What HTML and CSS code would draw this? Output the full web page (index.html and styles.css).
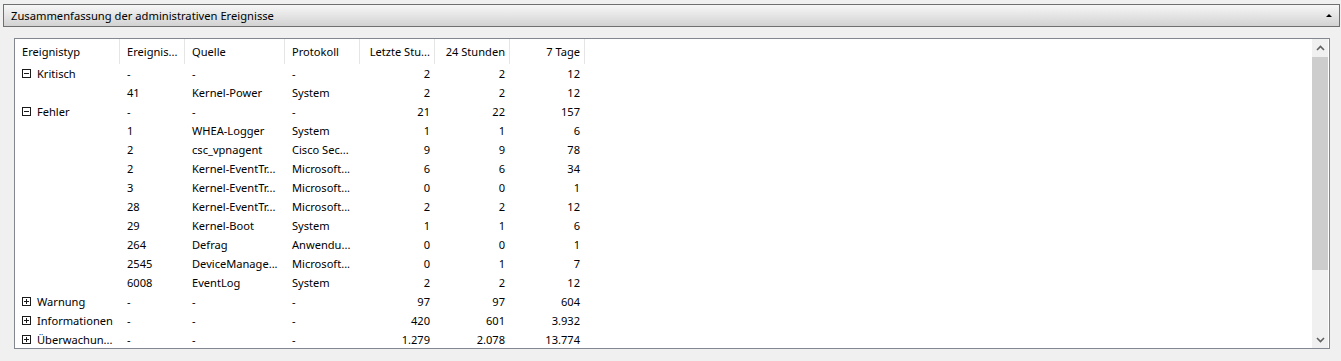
FILE: index.html
```html
<!DOCTYPE html>
<html lang="de">
<head>
<meta charset="utf-8">
<link rel="stylesheet" href="styles.css">
</head>
<body>
<div class="header">
  <span class="title">Zusammenfassung der administrativen Ereignisse</span>
  <span class="collapse"></span>
</div>
<div class="panel">
  <div class="content">
    <table class="grid">
      <colgroup>
        <col class="c1"><col class="c2"><col class="c3"><col class="c4"><col class="c5"><col class="c6"><col class="c7">
      </colgroup>
      <thead>
        <tr>
          <th>Ereignistyp</th><th>Ereignis...</th><th>Quelle</th><th>Protokoll</th><th class="num">Letzte Stu...</th><th class="num">24 Stunden</th><th class="num">7 Tage</th>
        </tr>
      </thead>
      <tbody>
        <tr><td><span class="tog"><svg width="9" height="9" viewBox="0 0 9 9"><rect x="0.5" y="0.5" width="8" height="8" fill="#fff" stroke="#1a1a1a"/><path d="M2 4.5h5" stroke="#1a1a1a"/></svg>Kritisch</span></td><td>-</td><td>-</td><td>-</td><td class="num">2</td><td class="num">2</td><td class="num">12</td></tr>
        <tr><td></td><td>41</td><td>Kernel-Power</td><td>System</td><td class="num">2</td><td class="num">2</td><td class="num">12</td></tr>
        <tr><td><span class="tog"><svg width="9" height="9" viewBox="0 0 9 9"><rect x="0.5" y="0.5" width="8" height="8" fill="#fff" stroke="#1a1a1a"/><path d="M2 4.5h5" stroke="#1a1a1a"/></svg>Fehler</span></td><td>-</td><td>-</td><td>-</td><td class="num">21</td><td class="num">22</td><td class="num">157</td></tr>
        <tr><td></td><td>1</td><td>WHEA-Logger</td><td>System</td><td class="num">1</td><td class="num">1</td><td class="num">6</td></tr>
        <tr><td></td><td>2</td><td>csc_vpnagent</td><td>Cisco Sec...</td><td class="num">9</td><td class="num">9</td><td class="num">78</td></tr>
        <tr><td></td><td>2</td><td>Kernel-EventTr...</td><td>Microsoft...</td><td class="num">6</td><td class="num">6</td><td class="num">34</td></tr>
        <tr><td></td><td>3</td><td>Kernel-EventTr...</td><td>Microsoft...</td><td class="num">0</td><td class="num">0</td><td class="num">1</td></tr>
        <tr><td></td><td>28</td><td>Kernel-EventTr...</td><td>Microsoft...</td><td class="num">2</td><td class="num">2</td><td class="num">12</td></tr>
        <tr><td></td><td>29</td><td>Kernel-Boot</td><td>System</td><td class="num">1</td><td class="num">1</td><td class="num">6</td></tr>
        <tr><td></td><td>264</td><td>Defrag</td><td>Anwendu...</td><td class="num">0</td><td class="num">0</td><td class="num">1</td></tr>
        <tr><td></td><td>2545</td><td>DeviceManage...</td><td>Microsoft...</td><td class="num">0</td><td class="num">1</td><td class="num">7</td></tr>
        <tr><td></td><td>6008</td><td>EventLog</td><td>System</td><td class="num">2</td><td class="num">2</td><td class="num">12</td></tr>
        <tr><td><span class="tog"><svg width="9" height="9" viewBox="0 0 9 9"><rect x="0.5" y="0.5" width="8" height="8" fill="#fff" stroke="#1a1a1a"/><path d="M2 4.5h5M4.5 2v5" stroke="#1a1a1a"/></svg>Warnung</span></td><td>-</td><td>-</td><td>-</td><td class="num">97</td><td class="num">97</td><td class="num">604</td></tr>
        <tr><td><span class="tog"><svg width="9" height="9" viewBox="0 0 9 9"><rect x="0.5" y="0.5" width="8" height="8" fill="#fff" stroke="#1a1a1a"/><path d="M2 4.5h5M4.5 2v5" stroke="#1a1a1a"/></svg>Informationen</span></td><td>-</td><td>-</td><td>-</td><td class="num">420</td><td class="num">601</td><td class="num">3.932</td></tr>
        <tr><td><span class="tog"><svg width="9" height="9" viewBox="0 0 9 9"><rect x="0.5" y="0.5" width="8" height="8" fill="#fff" stroke="#1a1a1a"/><path d="M2 4.5h5M4.5 2v5" stroke="#1a1a1a"/></svg>Überwachun...</span></td><td>-</td><td>-</td><td>-</td><td class="num">1.279</td><td class="num">2.078</td><td class="num">13.774</td></tr>
      </tbody>
    </table>
  </div>
  <div class="scrollbar">
    <div class="arrow"><svg width="9" height="6" viewBox="0 0 9 6"><path d="M1 5L4.5 1.5L8 5" fill="none" stroke="#606060" stroke-width="1.6"/></svg></div>
    <div class="track"><div class="thumb"></div></div>
    <div class="arrow"><svg width="9" height="6" viewBox="0 0 9 6"><path d="M1 1L4.5 4.5L8 1" fill="none" stroke="#606060" stroke-width="1.6"/></svg></div>
  </div>
</div>
</body>
</html>
```

FILE: styles.css
```css
html, body {
  margin: 0;
  padding: 0;
}
body {
  background: #f0f0f0;
  font-family: "Segoe UI", "Noto Sans", "Open Sans", sans-serif;
  font-size: 11.1px;
  color: #000;
  width: 1341px;
  height: 361px;
  overflow: hidden;
}
.header {
  margin: 4px 1px 0 3px;
  height: 21px;
  border: 1px solid #6f6f6f;
  background: linear-gradient(#f7f7f7, #d2d2d2);
  display: flex;
  align-items: center;
  justify-content: space-between;
  padding: 0 7px 0 7px;
  font-size: 11.2px;
}
.title {
  line-height: 21px;
}
.collapse {
  width: 0;
  height: 0;
  border-left: 3px solid transparent;
  border-right: 3px solid transparent;
  border-bottom: 3px solid #000;
  margin-top: -1px;
}
.panel {
  margin: 11px 11px 0 14px;
  height: 309px;
  border: 1px solid #828790;
  background: #fff;
  display: flex;
}
.content {
  flex: 1;
  overflow: hidden;
}
.grid {
  border-collapse: collapse;
  table-layout: fixed;
  width: 570px;
}
.c1 { width: 105px; }
.c2 { width: 65px; }
.c3 { width: 100px; }
.c4 { width: 75px; }
.c5 { width: 75px; }
.c6 { width: 75px; }
.c7 { width: 75px; }
.grid th {
  font-weight: normal;
  text-align: left;
  height: 25px;
  padding: 0 2px 0 7px;
  white-space: nowrap;
  overflow: hidden;
  box-shadow: inset -1px 0 0 #e5e5e5;
  vertical-align: middle;
}
.grid td {
  height: 19px;
  padding: 0 2px 0 7px;
  white-space: nowrap;
  overflow: hidden;
  vertical-align: middle;
  line-height: 19px;
}
.grid .num {
  text-align: right;
  padding: 0 5px 0 2px;
}
.tog {
  display: inline-flex;
  align-items: center;
  gap: 6px;
}
.tog svg {
  display: block;
  flex: none;
}
.scrollbar {
  width: 16px;
  margin-right: 1px;
  background: #f0f0f0;
  display: flex;
  flex-direction: column;
}
.arrow {
  height: 17px;
  display: flex;
  align-items: center;
  justify-content: center;
}
.track {
  flex: 1;
  display: flex;
  flex-direction: column;
}
.thumb {
  margin-top: 1px;
  height: 213px;
  background: #cdcdcd;
}
```
